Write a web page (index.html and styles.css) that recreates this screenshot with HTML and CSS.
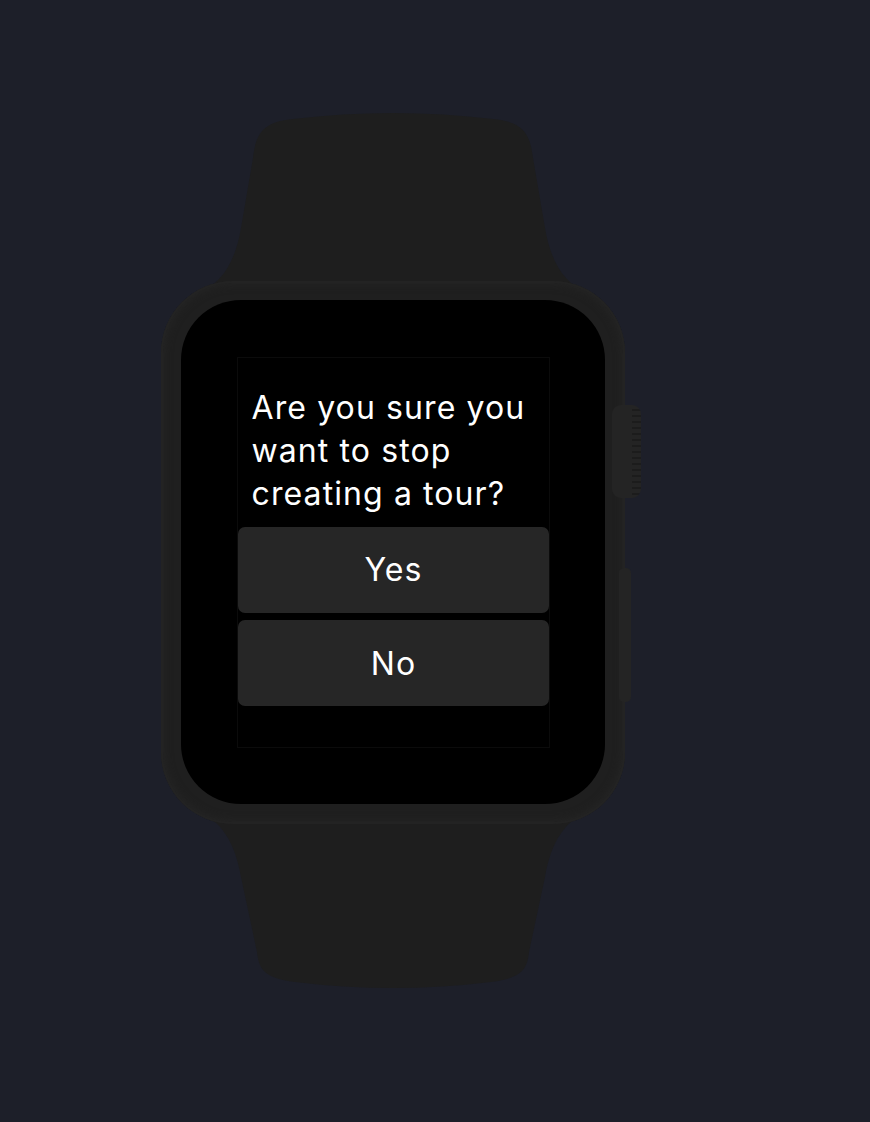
FILE: index.html
```html
<!DOCTYPE html>
<html lang="en">
<head>
<meta charset="utf-8">
<title>Stop creating tour</title>
<link rel="stylesheet" href="styles.css">
</head>
<body>
<div class="watch">
  <svg class="band band-top" width="464" height="180" viewBox="0 0 464 180" aria-hidden="true">
    <path d="M36 180 C60 172 74 150 80 115 L92 45 C95 18 104 9 132 6 Q232 -6 332 6 C360 9 369 18 372 45 L384 115 C390 150 404 172 428 180 Z" fill="#1e1e1e"/>
  </svg>
  <div class="case">
    <div class="crown"></div>
    <div class="side-button"></div>
    <div class="screen">
      <div class="dialog">
        <p class="question">Are you sure you want to stop creating a tour?</p>
        <div class="actions">
          <button class="action">Yes</button>
          <button class="action">No</button>
        </div>
      </div>
    </div>
  </div>
  <svg class="band band-bottom" width="464" height="177" viewBox="0 0 464 177" aria-hidden="true">
    <path d="M36 0 L428 0 C404 8 390 30 384 65 L368 140 C366 160 358 166 330 170 Q232 182 134 170 C106 166 98 160 96 140 L80 65 C74 30 60 8 36 0 Z" fill="#1e1e1e"/>
  </svg>
</div>
</body>
</html>
```

FILE: styles.css
```css
html, body {
  margin: 0;
  padding: 0;
}

body {
  background: #1d1f29;
  min-height: 100vh;
  font-family: "Inter", "Liberation Sans", sans-serif;
}

.watch {
  display: flex;
  flex-direction: column;
  width: 464px;
  margin-left: 161px;
  padding-top: 113px;
}

.band {
  display: block;
}

.band-top {
  margin-bottom: -12px;
}

.band-bottom {
  margin-top: -12px;
}

.case {
  position: relative;
  z-index: 1;
  width: 464px;
  height: 543px;
  box-sizing: border-box;
  padding: 19px 20px 20px 20px;
  border-radius: 72px;
  background: #1f1f1f;
  box-shadow: inset 0 0 0 2px #232323, inset 0 0 8px 3px #252525;
}

.crown {
  position: absolute;
  left: 451px;
  top: 124px;
  width: 29px;
  height: 93px;
  border-radius: 9px;
  background:
    repeating-linear-gradient(to bottom, transparent 0 4px, #1c1c1c 4px 6px) right / 9px 100% no-repeat,
    #242424;
  z-index: -1;
}

.side-button {
  position: absolute;
  left: 458px;
  top: 287px;
  width: 12px;
  height: 134px;
  border-radius: 5px;
  background: #242424;
  z-index: -1;
}

.screen {
  height: 504px;
  border-radius: 60px;
  background: #000;
  display: flex;
  align-items: center;
  justify-content: center;
}

.dialog {
  width: 313px;
  height: 391px;
  box-sizing: border-box;
  border: 1px solid #0b0b0b;
  display: flex;
  flex-direction: column;
}

.question {
  margin: 0;
  padding: 28px 14px 0 14px;
  color: #fff;
  font-size: 32px;
  line-height: 43px;
  letter-spacing: 1.1px;
  font-weight: 400;
}

.actions {
  display: flex;
  flex-direction: column;
  gap: 7px;
  margin-top: 12px;
}

.action {
  height: 86px;
  border: 0;
  border-radius: 7px;
  background: #262626;
  color: #fff;
  font-family: inherit;
  font-size: 32px;
  letter-spacing: 1px;
  font-weight: 400;
  padding: 0 0 0 1px;
  margin: 0;
}

.action + .action {
  padding-top: 2px;
}
```
